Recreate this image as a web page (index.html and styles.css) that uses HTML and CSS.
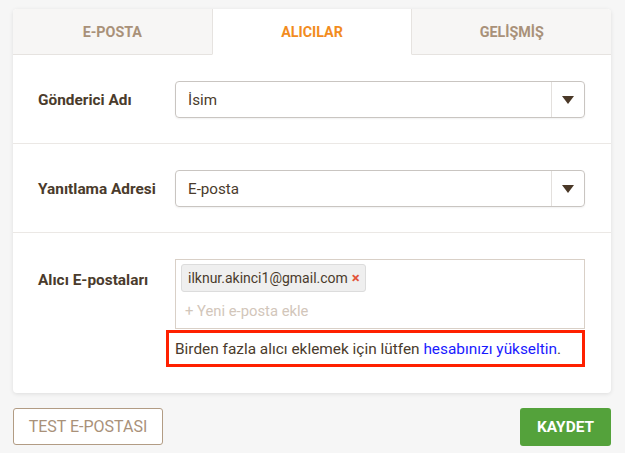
FILE: index.html
```html
<!doctype html>
<html lang="tr">
<head>
  <meta charset="utf-8">
  <title>Alıcılar</title>
  <link rel="stylesheet" href="styles.css">
</head>
<body>
  <div class="settings-card">
    <div class="tabs">
      <div class="tab">E-POSTA</div>
      <div class="tab active">ALICILAR</div>
      <div class="tab">GELİŞMİŞ</div>
    </div>
    <div class="field-row">
      <label class="field-label">Gönderici Adı</label>
      <div class="select-box">
        <span class="select-value">İsim</span>
        <span class="select-arrow"><svg width="12" height="8" viewBox="0 0 12 8"><path d="M0 0h12L6 8z" fill="#4a3827"/></svg></span>
      </div>
    </div>
    <div class="field-row">
      <label class="field-label">Yanıtlama Adresi</label>
      <div class="select-box">
        <span class="select-value">E-posta</span>
        <span class="select-arrow"><svg width="12" height="8" viewBox="0 0 12 8"><path d="M0 0h12L6 8z" fill="#4a3827"/></svg></span>
      </div>
    </div>
    <div class="field-row top last">
      <label class="field-label">Alıcı E-postaları</label>
      <div class="recipients">
        <div class="tag-box">
          <span class="tag">ilknur.akinci1@gmail.com <span class="tag-remove">×</span></span>
          <div class="tag-input">+ Yeni e-posta ekle</div>
        </div>
        <div class="upgrade-note">Birden fazla alıcı eklemek için lütfen <a href="#" class="upgrade-link">hesabınızı yükseltin</a>.</div>
      </div>
    </div>
  </div>
  <div class="actions">
    <button class="btn-outline">TEST E-POSTASI</button>
    <button class="btn-save">KAYDET</button>
  </div>
</body>
</html>
```

FILE: styles.css
```css
body {
  margin: 0;
  padding: 9px 14px 0 13px;
  background: #f6f6f6;
  font-family: Roboto, 'Liberation Sans', sans-serif;
  color: #4a3b2c;
}
.settings-card {
  background: #fff;
  border-radius: 4px;
  box-shadow: 0 1px 4px rgba(0,0,0,0.10);
  overflow: hidden;
}
.tabs {
  display: flex;
  height: 46px;
}
.tab {
  flex: 1;
  display: flex;
  align-items: center;
  justify-content: center;
  background: #f7f6f5;
  border-bottom: 1px solid #e6e3e0;
  color: #a99179;
  font-size: 14.3px;
  font-weight: 700;
}
.tab.active {
  background: #fff;
  color: #f28c1e;
  border-bottom-color: transparent;
  border-left: 1px solid #e6e3e0;
  border-right: 1px solid #e6e3e0;
}
.field-row {
  display: flex;
  align-items: center;
  padding: 26px 26px 25px 25px;
  border-bottom: 1px solid #ebe8e5;
}
.field-row.top {
  align-items: flex-start;
}
.field-row.last {
  border-bottom: none;
  padding-bottom: 26px;
}
.field-label {
  width: 137px;
  flex-shrink: 0;
  font-size: 15.4px;
  font-weight: 700;
  color: #4a3b2c;
}
.field-row.top .field-label {
  padding-top: 12px;
}
.select-box {
  flex: 1;
  display: flex;
  height: 37px;
  box-sizing: border-box;
  border: 1px solid #c9c5c1;
  border-radius: 4px;
  box-shadow: 0 1px 2px rgba(0,0,0,0.06);
}
.select-value {
  flex: 1;
  display: flex;
  align-items: center;
  padding-left: 12px;
  font-size: 15.2px;
}
.select-arrow {
  width: 32px;
  display: flex;
  align-items: center;
  justify-content: center;
  border-left: 1px solid #e3e0dd;
}
.recipients {
  flex: 1;
}
.tag-box {
  height: 70px;
  box-sizing: border-box;
  border: 1px solid #d9d0c7;
  padding: 4px 5px;
}
.tag {
  display: inline-flex;
  align-items: center;
  gap: 4px;
  height: 28px;
  box-sizing: border-box;
  padding: 0 5px 0 6px;
  background: #efefef;
  border: 1px solid #dcdcdc;
  border-radius: 3px;
  font-size: 14px;
  color: #4a3b2c;
}
.tag-remove {
  color: #e2543b;
  font-weight: 700;
  font-size: 15px;
}
.tag-input {
  margin-top: 10px;
  padding-left: 4px;
  font-size: 14.8px;
  color: #d2c6ba;
}
.upgrade-note {
  margin: 1px 0 0 -9px;
  border: 3px solid #ff2000;
  padding: 0 0 0 6px;
  height: 37px;
  box-sizing: border-box;
  display: flex;
  align-items: center;
  font-size: 15.4px;
  color: #4a3b2c;
  white-space: pre;
}
.upgrade-link {
  color: #1a1aff;
  text-decoration: none;
}
.actions {
  display: flex;
  justify-content: space-between;
  margin-top: 15px;
}
.btn-outline {
  width: 150px;
  height: 37px;
  background: #fff;
  border: 1px solid #b29c84;
  border-radius: 3px;
  color: #a99179;
  font-family: inherit;
  font-size: 16px;
}
.btn-save {
  width: 91px;
  height: 38px;
  background: #54a23b;
  border: none;
  border-radius: 3px;
  color: #fff;
  font-family: inherit;
  font-size: 15.4px;
  font-weight: 700;
}
```
